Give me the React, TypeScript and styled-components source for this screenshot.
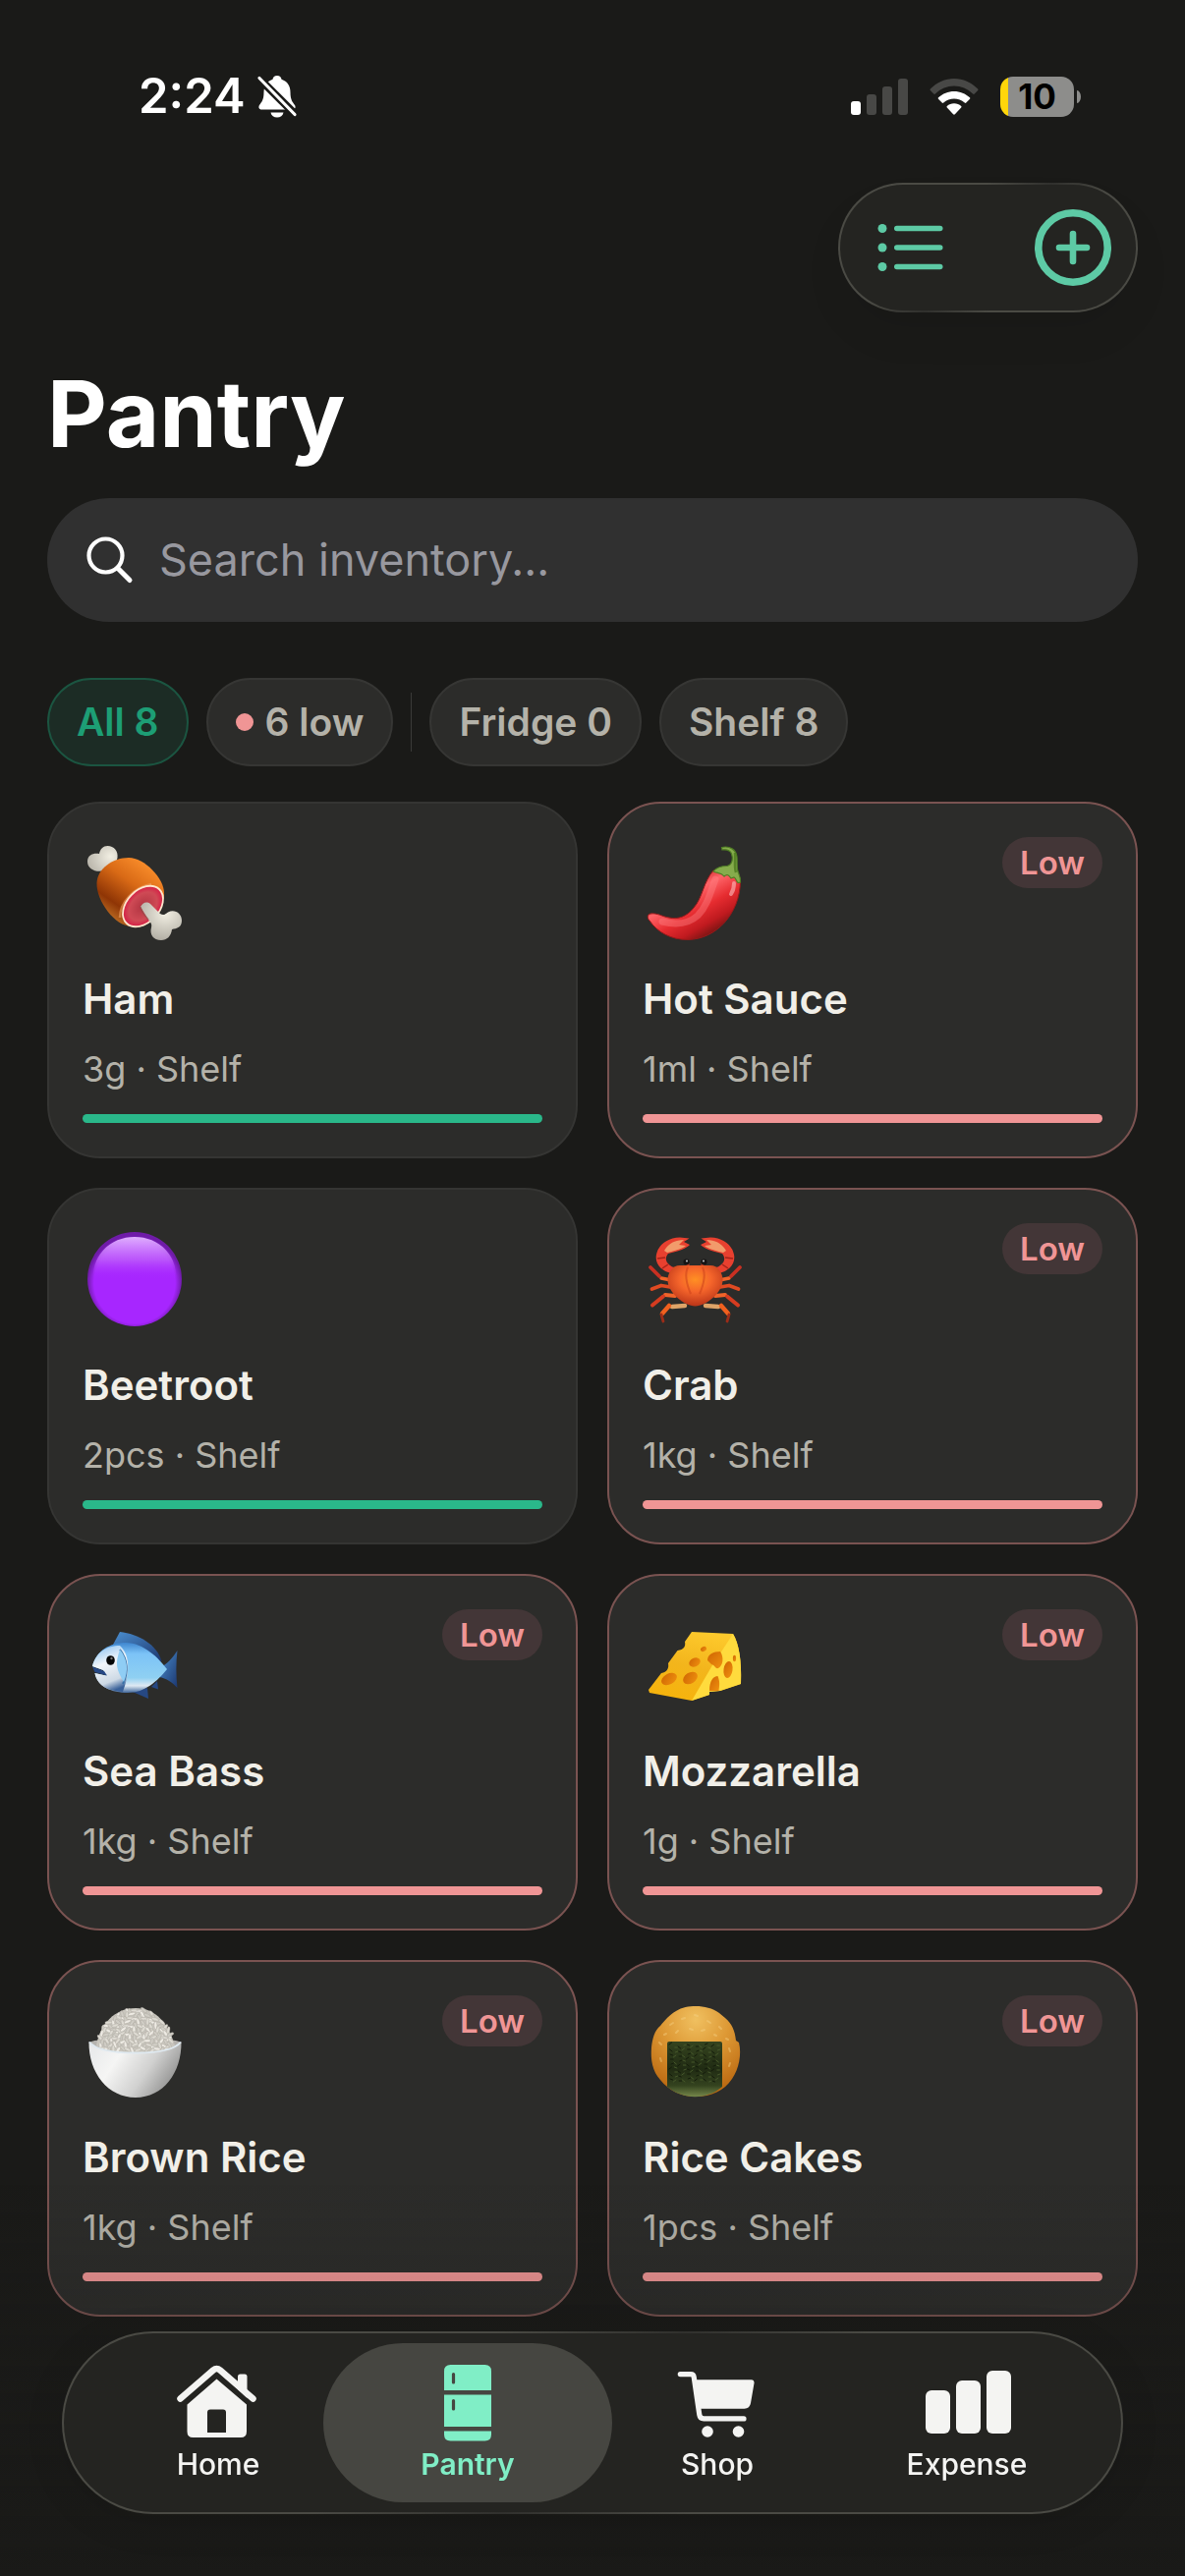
import React from "react";
import styled, { createGlobalStyle, css } from "styled-components";

const color = {
  page: "#1a1a18",
  card: "#2c2c2a",
  cardBorder: "#353533",
  field: "#303030",
  text: "#f1efe8",
  muted: "#b4b2a9",
  placeholder: "#98989f",
  low: "#f09595",
  lowBorder: "#7a5351",
  lowFill: "#433637",
  green: "#2ab88a",
  mint: "#5dcaa5",
  glass: "#242421",
};

const GlobalStyle = createGlobalStyle`
  *, *::before, *::after { box-sizing: border-box; }
  body {
    margin: 0;
    background: ${color.page};
    color: ${color.text};
    font-family: Inter, "Liberation Sans", sans-serif;
  }
  button, input { font: inherit; }
`;

const glassPanel = css`
  border: 2px solid transparent;
  background:
    linear-gradient(${color.glass}, ${color.glass}) padding-box,
    linear-gradient(135deg, #4a4a44 0 35%, #30302d 50%, #4a4a44 65% 100%) border-box;
`;

const Screen = styled.div`
  min-height: 100vh;
  padding: 68px 48px 264px;
`;

const StatusBar = styled.header`
  display: flex;
  align-items: center;
  justify-content: space-between;
  height: 60px;
  padding: 0 58px 0 93px;
`;

const StatusGroup = styled.div<{ $gap: number }>`
  display: flex;
  align-items: center;
  gap: ${(p) => p.$gap}px;
`;

const Clock = styled.time`
  font-size: 49px;
  font-weight: 600;
  line-height: 60px;
  color: #fff;
`;

const Battery = styled.div`
  display: flex;
  align-items: center;
  gap: 3px;
`;

const BatteryBody = styled.div`
  width: 75px;
  height: 41px;
  border-radius: 13px;
  background: linear-gradient(90deg, #ffd60a 8px, #8d8d8b 8px);
  color: #000;
  font-size: 35px;
  font-weight: 700;
  line-height: 41px;
  text-align: center;
`;

const BatteryTip = styled.span`
  width: 4px;
  height: 13px;
  border-radius: 0 4px 4px 0 / 0 50% 50% 0;
  background: #8d8d8b;
`;

const Toolbar = styled.div`
  display: flex;
  align-items: center;
  gap: 93px;
  width: fit-content;
  height: 132px;
  margin: 58px 0 45px auto;
  padding: 0 25px 0 38px;
  border-radius: 66px;
  ${glassPanel}
  box-shadow: 0 24px 40px rgba(0, 0, 0, 0.06);
`;

const IconButton = styled.button`
  display: flex;
  padding: 0;
  border: 0;
  background: none;
  color: ${color.mint};
`;

const Title = styled.h1`
  margin: 0 0 28px;
  color: #fff;
  font-size: 94px;
  font-weight: 700;
  line-height: 116px;
`;

const SearchField = styled.label`
  display: flex;
  align-items: center;
  gap: 26px;
  height: 126px;
  margin-bottom: 57px;
  padding: 0 38px;
  border-radius: 63px;
  background: ${color.field};
`;

const SearchInput = styled.input`
  flex: 1;
  min-width: 0;
  padding: 0;
  border: 0;
  outline: 0;
  background: none;
  color: #fff;
  font-size: 45px;
  line-height: 60px;
  &::placeholder {
    color: ${color.placeholder};
    opacity: 1;
  }
`;

const Filters = styled.div`
  display: flex;
  align-items: center;
  gap: 18px;
  margin-bottom: 36px;
`;

const Chip = styled.button<{ $active?: boolean }>`
  display: flex;
  align-items: center;
  gap: 12px;
  height: 90px;
  padding: 0 28px;
  border: 2px solid ${(p) => (p.$active ? "#1b5541" : "#363634")};
  border-radius: 45px;
  background: ${(p) => (p.$active ? "#1c2c25" : color.card)};
  color: ${(p) => (p.$active ? "#1d9e75" : color.muted)};
  font-size: 39px;
  font-weight: 600;
  line-height: 48px;
  white-space: nowrap;
`;

const Dot = styled.span`
  width: 18px;
  height: 18px;
  border-radius: 50%;
  background: ${color.low};
`;

const Divider = styled.span`
  width: 1px;
  height: 60px;
  background: #3a3a38;
`;

const Grid = styled.main`
  display: grid;
  grid-template-columns: 1fr 1fr;
  gap: 30px;
`;

const Card = styled.article<{ $low: boolean }>`
  padding: 34px;
  border: 2px solid ${(p) => (p.$low ? color.lowBorder : color.cardBorder)};
  border-radius: 54px;
  background: ${color.card};
`;

const CardTop = styled.div`
  display: flex;
  align-items: flex-start;
  justify-content: space-between;
  height: 108px;
  margin-bottom: 30px;
`;

const Badge = styled.span`
  padding: 0 18px;
  border-radius: 26px;
  background: ${color.lowFill};
  color: ${color.low};
  font-size: 33px;
  font-weight: 600;
  line-height: 52px;
`;

const Name = styled.h2`
  margin: 0 0 22px;
  font-size: 42px;
  font-weight: 600;
  line-height: 54px;
`;

const Detail = styled.p`
  margin: 0 0 24px;
  color: ${color.muted};
  font-size: 36px;
  line-height: 44px;
`;

const Meter = styled.div<{ $low: boolean }>`
  height: 9px;
  border-radius: 5px;
  background: ${(p) => (p.$low ? color.low : color.green)};
`;

const BottomFade = styled.div`
  position: fixed;
  inset: auto 0 0;
  height: 400px;
  background: linear-gradient(rgba(26, 26, 24, 0), rgba(26, 26, 24, 0.5));
  pointer-events: none;
`;

const TabBar = styled.nav`
  position: fixed;
  right: 63px;
  bottom: 63px;
  left: 63px;
  display: flex;
  padding: 10px;
  border-radius: 93px;
  ${glassPanel}
  box-shadow: 0 8px 40px rgba(0, 0, 0, 0.1);
`;

const Tab = styled.a<{ $active?: boolean }>`
  display: flex;
  flex: 1;
  flex-direction: column;
  align-items: center;
  gap: 5px;
  height: 162px;
  padding-top: 22px;
  border-radius: 81px;
  color: #f4f4f2;
  font-size: 30px;
  font-weight: 500;
  line-height: 36px;
  text-decoration: none;
  & + & {
    margin-left: -40px;
  }
  ${(p) =>
    p.$active &&
    css`
      background: #464641;
      color: #80eec6;
      font-weight: 600;
    `}
`;

/* ---------- status and toolbar icons ---------- */

const BellOff = () => (
  <svg width="42" height="44" viewBox="0 0 42 44" fill="#fff" aria-hidden="true">
    <path d="M21 1c2.600 0 4.200 1.500 4.500 3.700C31.500 6.700 34.500 11.500 34.500 18c0 8 2.500 10 4.500 13 1.300 2.200.4 4.500-2.300 4.500H5.300C2.600 35.500 1.700 33.200 3 31c2-3 4.500-5 4.500-13 0-6.500 3-11.300 9-13.300C16.800 2.500 18.400 1 21 1z" />
    <path d="M14.500 38.500h13c-.6 3.300-3.200 5-6.500 5s-5.900-1.700-6.500-5z" />
    <path d="M2 3l38 38" stroke={color.page} strokeWidth="8" />
    <path d="M3 3.500l36 37" stroke="#fff" strokeWidth="3.200" strokeLinecap="round" />
  </svg>
);

const Signal = () => (
  <svg width="58" height="37" viewBox="0 0 58 37" aria-hidden="true">
    <rect y="23" width="10" height="14" rx="3" fill="#fff" />
    <rect x="16" y="16" width="10" height="21" rx="3" fill="#484846" />
    <rect x="32" y="8" width="10" height="29" rx="3" fill="#484846" />
    <rect x="48" width="10" height="37" rx="3" fill="#484846" />
  </svg>
);

const Wifi = () => (
  <svg width="50" height="37" viewBox="0 0 50 37" aria-hidden="true">
    <path d="M.8 10.600C7.500 3.700 16 0 25 0s17.500 3.700 24.200 10.600c.5.500.5 1 0 1.500L45.800 15.500c-.5.500-1.200.5-1.700 0C38.800 10.500 32 7.600 25 7.600S11.200 10.500 5.900 15.500c-.5.500-1.200.5-1.700 0L.8 12.100c-.5-.5-.5-1 0-1.500z" fill="#484846" />
    <path d="M9 19.200C13.300 15.200 19 12.900 25 12.900S36.700 15.200 41 19.200c.5.500.5 1 0 1.500l-3.700 3.800c-.5.500-1.100.5-1.600 0C32.700 21.900 29 20.400 25 20.400S17.300 21.900 14.300 24.500c-.5.500-1.100.5-1.600 0L9 20.700c-.5-.5-.5-1 0-1.500z" fill="#fff" />
    <path d="M17.800 28C19.700 26.300 22.200 25.300 25 25.300s5.300 1 7.200 2.700c.5.500.5 1 0 1.500l-6.300 6.700c-.6.600-1.200.6-1.800 0l-6.300-6.700c-.5-.5-.5-1 0-1.500z" fill="#fff" />
  </svg>
);

const ListIcon = () => (
  <svg width="67" height="50" viewBox="0 0 67 50" fill="currentColor" aria-hidden="true">
    {[5.5, 25, 44.5].map((y) => (
      <g key={y}>
        <circle cx="5" cy={y} r="4.500" />
        <rect x="17" y={y - 2.8} width="49.500" height="5.600" rx="2.800" />
      </g>
    ))}
  </svg>
);

const AddIcon = () => (
  <svg width="78" height="78" viewBox="0 0 78 78" fill="none" stroke="currentColor" aria-hidden="true">
    <circle cx="39" cy="39" r="35.200" strokeWidth="7.600" />
    <path d="M39 25v28M25 39h28" strokeWidth="6.600" strokeLinecap="round" />
  </svg>
);

const SearchIcon = () => (
  <svg width="50" height="50" viewBox="0 0 50 50" fill="none" stroke="#fff" strokeLinecap="round" aria-hidden="true">
    <circle cx="21.500" cy="20.500" r="17" strokeWidth="4.200" />
    <path d="M34 33.500L46 45.500" strokeWidth="5" />
  </svg>
);

/* ---------- tab icons ---------- */

const HomeIcon = () => (
  <svg width="96" height="78" viewBox="0 0 96 78" fill="currentColor" aria-hidden="true">
    <path d="M68 25V12q0-2.500 2.500-2.500h4.500q2.500 0 2.500 2.500v22z" />
    <path d="M9.500 34.500L43 5.500q3.500-3 7 0l33.500 29" fill="none" stroke="currentColor" strokeWidth="6.500" strokeLinecap="round" strokeLinejoin="round" />
    <path fillRule="evenodd" d="M46.500 14.500L77 40.500V68q0 6-6 6H22.500q-6 0-6-6V40.500zM40 45.500q-3 0-3 3V69h19V48.500q0-3-3-3z" />
  </svg>
);

const FridgeIcon = () => (
  <svg width="96" height="78" viewBox="0 0 96 78" fill="currentColor" aria-hidden="true">
    <path d="M24 26V6.500Q24 0 30.500 0h35Q72 0 72 6.500V26z" />
    <path d="M24 30.500h48V63H24z" />
    <path d="M24 67.500h48V71q0 6.500-6.500 6.500h-35Q24 77.500 24 71z" />
    <path d="M33.500 9.500v8.500M33.500 36.500V45" stroke="#464641" strokeWidth="3.200" strokeLinecap="round" />
  </svg>
);

const CartIcon = () => (
  <svg width="96" height="78" viewBox="1 0 96 78" fill="currentColor" aria-hidden="true">
    <path d="M11.300 9.600H22q2.800 0 3.200 2.800l5.600 38.500q.6 4 4.500 4H76" fill="none" stroke="currentColor" strokeWidth="5.200" strokeLinecap="round" strokeLinejoin="round" />
    <path d="M26.500 15.300H83.500q3.500 0 3 3.500L83 39q-.9 5.700-6.500 5.700H31z" />
    <circle cx="39" cy="68" r="5.800" />
    <circle cx="70.500" cy="68" r="5.800" />
  </svg>
);

const ExpenseIcon = () => (
  <svg width="96" height="78" viewBox="1 0 96 78" fill="currentColor" aria-hidden="true">
    <rect x="7" y="26" width="25" height="44" rx="6" />
    <rect x="38" y="16" width="25" height="54" rx="6" />
    <rect x="69" y="6" width="25" height="64" rx="6" />
  </svg>
);

/* ---------- food pictures ---------- */

const Food = ({ label, children }: { label: string; children: React.ReactNode }) => (
  <svg width="108" height="108" viewBox="0 0 108 108" role="img" aria-label={label}>
    {children}
  </svg>
);

const Ham = () => (
  <Food label="Ham">
    <defs>
      <linearGradient id="hamSkin" x1=".75" y1=".05" x2=".2" y2=".85">
        <stop offset="0" stopColor="#fb8f2c" />
        <stop offset=".4" stopColor="#d96a16" />
        <stop offset=".8" stopColor="#8f3505" />
        <stop offset="1" stopColor="#b5651f" />
      </linearGradient>
      <radialGradient id="hamBone" cx=".6" cy=".3" r=".8">
        <stop offset="0" stopColor="#f1eee2" />
        <stop offset="1" stopColor="#aaa69c" />
      </radialGradient>
      <radialGradient id="hamCut">
        <stop offset="0" stopColor="#b03441" />
        <stop offset=".7" stopColor="#cf4a55" />
        <stop offset="1" stopColor="#d61c45" />
      </radialGradient>
    </defs>
    <path d="M25.500 9C32 9 36.500 14 35.500 21L34 27L44 38L36 45L23 34C14 36.500 5 33 5 25C5 18 11 16 17 17C18 12 21 9 25.500 9Z" fill="url(#hamBone)" />
    <path d="M47 21C63 21 83 42 83 57C83 73 66 91 50 91C33 91 14 65 14.500 47C15 32 31 21 47 21Z" fill="url(#hamSkin)" />
    <path d="M38 82C38 67 52 51 70 48" fill="none" stroke="#f2a063" strokeWidth="2.500" opacity=".6" />
    <ellipse cx="61.500" cy="70.500" rx="24" ry="16.500" transform="rotate(-46 61.500 70.500)" fill="url(#hamCut)" stroke="#ffe6cc" strokeWidth="1.800" />
    <path d="M59 71C61 67 65 65 69 68L79 78C82 80 84 79 87 76.500C94 73 101 78 101 85C101 92 96 93 91 94C90 101 86 105 80 105C72 105 68 99 70 92C71 88 69 87 67 84Z" fill="url(#hamBone)" />
    <path d="M59 71C60 77 64 80 67 84" fill="none" stroke="#8a4b48" strokeWidth="1.500" opacity=".6" />
  </Food>
);

const Chili = () => (
  <Food label="Hot pepper">
    <defs>
      <linearGradient id="chiliSkin" x1=".3" y1=".2" x2=".8" y2=".85">
        <stop offset="0" stopColor="#c41f23" />
        <stop offset=".25" stopColor="#ff6468" />
        <stop offset=".55" stopColor="#e62c30" />
        <stop offset=".8" stopColor="#c01a1f" />
        <stop offset="1" stopColor="#741412" />
      </linearGradient>
    </defs>
    <path d="M72 34C62 45 61 62 52 72C45 81 36 84 27 82C20 81 15 77 8 78C4 79 5 83 7 85C15 97 29 104.500 46 104.500C75 104 99 78 99.500 45L92 35Z" fill="url(#chiliSkin)" stroke="#96191a" strokeWidth="1" />
    <path d="M74 43C69 56 66 70 56 80C47 88 35 90 20 86" fill="none" stroke="#ff8486" strokeWidth="7" strokeLinecap="round" opacity=".4" />
    <path d="M93 47C93 52 92 55 90 58" fill="none" stroke="#ffd9d9" strokeWidth="4" strokeLinecap="round" opacity=".5" />
    <path d="M72 35C75 31 81 29.500 86 29.500C92 28 92 21 90.500 17C89 13 85 12.500 81 13L80.500 10.500C89 8.500 95 13 96 20C96.500 27 95.500 31 97 35C98 38 100 41 99.500 46L97 46.500C95 44 95 42 93 41L90 42C88 39 86 37 83 40C80 36 76 37 72 35Z" fill="#86ac4c" stroke="#4f7d24" strokeWidth="1.200" />
    <path d="M94 16C94.500 24 93 30 95 36" fill="none" stroke="#4c7a1e" strokeWidth="2.500" opacity=".8" />
  </Food>
);

const Beetroot = () => (
  <Food label="Purple circle">
    <defs>
      <radialGradient id="beetFill" cy=".54">
        <stop offset=".86" stopColor="#a726ff" />
        <stop offset="1" stopColor="#6f1ba8" />
      </radialGradient>
      <linearGradient id="beetShine" x1="0" y1="0" x2="0" y2="1">
        <stop offset="0" stopColor="#e0b0ff" />
        <stop offset=".55" stopColor="#c062fa" stopOpacity=".75" />
        <stop offset="1" stopColor="#a726ff" stopOpacity="0" />
      </linearGradient>
    </defs>
    <circle cx="53" cy="57" r="48" fill="url(#beetFill)" />
    <path d="M10.500 57C10.500 30 30 14 53 14S95.500 30 95.500 57Z" fill="url(#beetShine)" />
  </Food>
);

const CrabSide = () => (
  <g>
    <g fill="none" strokeLinecap="round" strokeLinejoin="round">
      <path d="M33 72L42 74M28 62L33 63" stroke="#c48b58" strokeWidth="3" />
      <path d="M29 58L19 56" stroke="#f0642a" strokeWidth="3.500" />
      <path d="M17 54L8 45" stroke="#c93022" strokeWidth="3.800" />
      <path d="M28 65L19 63.500L9.500 67" stroke="#e04a22" strokeWidth="3.800" />
      <path d="M33 74L23 73" stroke="#f0642a" strokeWidth="4" />
      <path d="M21 74.500L10 83.500" stroke="#d63c20" strokeWidth="4" />
      <path d="M43 84L30 85" stroke="#dda468" strokeWidth="4.500" />
      <path d="M27 84L20 92" stroke="#f0601e" strokeWidth="4.500" />
      <path d="M19 93L21 100" stroke="#9c2c18" strokeWidth="2.800" />
    </g>
    <path d="M29 51C20 49 12 42 14 32C16 22 25 15 38 14.500L47.500 15.500L42 19L48 22C43 27 34 29 26 31C21 37 25 43 34 46Z" fill="#e8402f" />
    <path d="M22 28C26 21 33 17 42 17L37 22L44 23C39 27 32 28 25 30Z" fill="#f29b6b" />
    <path d="M15 36L23 35M20 46L26 42" stroke="#a52218" strokeWidth="1.500" />
    <path d="M46 45V41" stroke="#b83c24" strokeWidth="3" />
    <circle cx="44.500" cy="39.500" r="3" fill="#151313" />
    <circle cx="45" cy="38.500" r=".9" fill="#ddd" />
  </g>
);

const Crab = () => (
  <Food label="Crab">
    <defs>
      <radialGradient id="crabShell" cx=".5" cy=".35" r=".65">
        <stop offset="0" stopColor="#ff9023" />
        <stop offset=".45" stopColor="#f5652b" />
        <stop offset="1" stopColor="#b93418" />
      </radialGradient>
    </defs>
    <CrabSide />
    <g transform="matrix(-1 0 0 1 107 0)">
      <CrabSide />
    </g>
    <path d="M38 43H69C77 43 81.500 51 81.500 58C81.500 70 65 84.500 53.500 84.500S25.500 70 25.500 58C25.500 51 30 43 38 43Z" fill="url(#crabShell)" />
    <path d="M46 45C42 53 46 65 49 72M61 45C65 53 61 65 58 72" fill="none" stroke="#cf451c" strokeWidth="2" opacity=".6" />
  </Food>
);

const Fish = () => (
  <Food label="Fish">
    <defs>
      <linearGradient id="fishBody" x1="0" y1="0" x2="0" y2="1">
        <stop offset="0" stopColor="#3f86cf" />
        <stop offset=".22" stopColor="#7cc3f7" />
        <stop offset=".7" stopColor="#8fd0f2" />
        <stop offset=".86" stopColor="#dfe9f2" />
        <stop offset="1" stopColor="#41689c" />
      </linearGradient>
      <linearGradient id="fishFin" x1="0" y1="0" x2="1" y2="1">
        <stop offset="0" stopColor="#4b8fd0" />
        <stop offset="1" stopColor="#1c376f" />
      </linearGradient>
      <linearGradient id="fishHead" x1=".2" y1="0" x2=".5" y2="1">
        <stop offset="0" stopColor="#8fc4f2" />
        <stop offset=".4" stopColor="#f2f6fa" />
        <stop offset=".8" stopColor="#cdd9e5" />
        <stop offset="1" stopColor="#3a6199" />
      </linearGradient>
    </defs>
    <path d="M31 36L38 23C57 25 76 36 80.500 53L66 52Z" fill="url(#fishFin)" />
    <path d="M78 60C86 56 92 49 96.500 42C95 55 95 67 96.500 80C92 75 85 70 78 69Z" fill="url(#fishFin)" />
    <path d="M51 84L67 91L66 80ZM70 79L77 81.500L76 73Z" fill="#264883" />
    <path d="M10 58C14 42 28 34 44 34C62 34 78 50 86 61C76 73 64 85 46 85C30 85 15 79 12.500 65L24 67.500L21 62Z" fill="url(#fishBody)" />
    <path d="M10 58C14 43 25 37 38 37C49 47 48 66 41 84C28 83 15 79 12.500 65L24 67.500L21 62Z" fill="url(#fishHead)" />
    <path d="M38 41C46 51 47 64 41 76" fill="none" stroke="#3972a8" strokeWidth="1.800" />
    <path d="M38 41C33 55 34 61 42 74C47 62 46 51 38 41Z" fill="#8fcdf4" />
    <path d="M10 58.500L22 63L25 67.500L12.500 64" fill="#254886" />
    <ellipse cx="28.500" cy="52" rx="4.300" ry="4.800" fill="#050505" />
    <circle cx="29.500" cy="50" r="1.200" fill="#777" />
  </Food>
);

const Cheese = () => (
  <Food label="Cheese">
    <defs>
      <linearGradient id="cheeseTop" x1=".6" y1="0" x2=".3" y2="1">
        <stop offset="0" stopColor="#fdc92c" />
        <stop offset=".5" stopColor="#f3b51c" />
        <stop offset="1" stopColor="#f6b30c" />
      </linearGradient>
      <linearGradient id="cheeseHole" x1="0" y1="0" x2="1" y2="1">
        <stop offset="0" stopColor="#cf6503" />
        <stop offset="1" stopColor="#f0910f" />
      </linearGradient>
    </defs>
    <path d="M50 23L92 25C98 35 101 52 100 76L79 83L68 84V87L50 93L7 85L6 82L19 65C25 64 27 60 26 55L35.500 42C42 41 44 38 43 33Z" fill="url(#cheeseTop)" />
    <path d="M92 25C98 35 101 52 100 76L79 83L68 84V87L50 93L71 57Z" fill="#ffdb3d" />
    <g fill="url(#cheeseHole)">
      <ellipse cx="27" cy="71" rx="8.500" ry="5.500" transform="rotate(-28 27 71)" />
      <ellipse cx="48.500" cy="70" rx="8" ry="5.500" transform="rotate(-32 48.500 70)" />
      <ellipse cx="53" cy="54" rx="6" ry="4.300" transform="rotate(-25 53 54)" />
      <path d="M66 52C66 46 72 43 79 43C83 49 82 57 77 60C74 61 74 57 70 56Z" />
      <ellipse cx="87" cy="61.500" rx="4.500" ry="8.500" transform="rotate(8 87 61.500)" />
      <ellipse cx="62" cy="40.500" rx="3.200" ry="2.300" transform="rotate(-30 62 40.500)" />
      <ellipse cx="93.500" cy="50" rx="1.600" ry="3.200" />
      <path d="M68 83C68 73 72 68 76.500 68C79 74 78 78 77.500 83Z" />
    </g>
  </Food>
);

/* Grains sit on a jittered lattice inside the dome of rice. */
const grains = Array.from({ length: 198 }, (_, i) => {
  const row = Math.floor(i / 18);
  const x = 18 + (i % 18) * 4.3 + ((i * 29) % 7) / 2;
  const y = 15 + row * 3.9 + ((i * 17) % 5) / 2;
  return { x, y, angle: (i * i * 31 + row * 53) % 180, shade: ["#eeebe4", "#dedbd3", "#d0cdc5"][(i * 5 + row) % 3] };
}).filter(({ x, y }) => ((x - 54) / 37) ** 2 + ((y - 50) / 36) ** 2 < 1);

const Rice = () => (
  <Food label="Bowl of rice">
    <defs>
      <linearGradient id="riceBowl" x1="0" y1=".2" x2="1" y2=".6">
        <stop offset="0" stopColor="#e9eaeb" />
        <stop offset=".3" stopColor="#f5f5f4" />
        <stop offset=".65" stopColor="#d1d1d0" />
        <stop offset="1" stopColor="#8d8d8c" />
      </linearGradient>
    </defs>
    <path d="M7 48C13 42 95 42 100 48C100 57 80 62 54 62S7 57 7 48Z" fill="#b4b2ae" />
    <path d="M14 51C18 29 33 13 54 13S87 29 94 51C85 61 23 61 14 51Z" fill="#c9c6be" />
    {grains.map((g, i) => (
      <ellipse key={i} cx={g.x} cy={g.y} rx="3.800" ry="1.500" fill={g.shade} stroke="#a8a49b" strokeWidth=".4" transform={`rotate(${g.angle} ${g.x} ${g.y})`} />
    ))}
    <path d="M6.500 47C12 55 31 58.500 54 58.500S95 55 100.500 47C101 79 82 104 54 104S6 79 6.500 47Z" fill="url(#riceBowl)" />
    <path d="M7 47.500C13 55 31 58.500 54 58.500S94 55 100 47.500" fill="none" stroke="#dfe9f0" strokeWidth="2" />
  </Food>
);

const flecks = Array.from({ length: 96 }, (_, i) => ({
  x: 27 + (i % 12) * 4.3 + ((i * 13) % 5) / 2,
  y: 50 + Math.floor(i / 12) * 5 + ((i * 7) % 4),
  tilt: ((i * 37) % 5) - 2,
}));

const RiceCracker = () => (
  <Food label="Rice cracker">
    <defs>
      <radialGradient id="crackerFill" cx=".5" cy=".15" r=".85">
        <stop offset="0" stopColor="#f0c060" />
        <stop offset=".45" stopColor="#dd9834" />
        <stop offset="1" stopColor="#b9660f" />
      </radialGradient>
      <linearGradient id="noriFill" x1="0" y1="0" x2="0" y2="1">
        <stop offset="0" stopColor="#35441f" />
        <stop offset=".5" stopColor="#202b13" />
        <stop offset=".8" stopColor="#34431f" />
        <stop offset="1" stopColor="#75874a" />
      </linearGradient>
    </defs>
    <path d="M54 11C63 11 71 13 78 18L84 23C91 29 94 36 95 46L98 48C101 60 98 75 91 85C83 97 70 103 54 103C39 103 27 97 18 86C10 77 8 66 9 53C10 44 12 36 18 31C23 25 27 20 34 16C40 12 47 11 54 11Z" fill="url(#crackerFill)" />
    <path d="M28 30l3-2M40 24l3-1M53 20l3 1M66 26l3 2M78 32l2 2M34 38l2-2M48 34l3 1M60 36l3-1M73 40l2 1M17 48l2 2M18 64l1 3M88 54l1 3M89 69l-1 3M22 40l2-1M85 44l2 1" stroke="#f8d68a" strokeWidth="2" strokeLinecap="round" opacity=".4" />
    <path d="M25 49Q25 47 27 47H79Q81 47 81 49V93C66 106.500 41 106.500 25 93Z" fill="url(#noriFill)" />
    {flecks.map((f, i) => (
      <path key={i} d={`M${f.x} ${f.y}l2.600 ${f.tilt}`} stroke={i % 2 ? "#46582b" : "#141c0b"} strokeWidth="1" strokeLinecap="round" />
    ))}
  </Food>
);

/* ---------- data ---------- */

const items = [
  { name: "Ham", amount: "3g", low: false, Picture: Ham },
  { name: "Hot Sauce", amount: "1ml", low: true, Picture: Chili },
  { name: "Beetroot", amount: "2pcs", low: false, Picture: Beetroot },
  { name: "Crab", amount: "1kg", low: true, Picture: Crab },
  { name: "Sea Bass", amount: "1kg", low: true, Picture: Fish },
  { name: "Mozzarella", amount: "1g", low: true, Picture: Cheese },
  { name: "Brown Rice", amount: "1kg", low: true, Picture: Rice },
  { name: "Rice Cakes", amount: "1pcs", low: true, Picture: RiceCracker },
];

const tabs = [
  { label: "Home", Icon: HomeIcon },
  { label: "Pantry", Icon: FridgeIcon, active: true },
  { label: "Shop", Icon: CartIcon },
  { label: "Expense", Icon: ExpenseIcon },
];

export default function App() {
  return (
    <>
      <GlobalStyle />
      <Screen>
        <StatusBar>
          <StatusGroup $gap={11}>
            <Clock>2:24</Clock>
            <BellOff />
          </StatusGroup>
          <StatusGroup $gap={22}>
            <Signal />
            <Wifi />
            <Battery>
              <BatteryBody>10</BatteryBody>
              <BatteryTip />
            </Battery>
          </StatusGroup>
        </StatusBar>

        <Toolbar>
          <IconButton type="button" aria-label="List view">
            <ListIcon />
          </IconButton>
          <IconButton type="button" aria-label="Add item">
            <AddIcon />
          </IconButton>
        </Toolbar>

        <Title>Pantry</Title>

        <SearchField>
          <SearchIcon />
          <SearchInput type="text" aria-label="Search inventory" placeholder="Search inventory..." />
        </SearchField>

        <Filters>
          <Chip type="button" $active>All 8</Chip>
          <Chip type="button"><Dot />6 low</Chip>
          <Divider />
          <Chip type="button">Fridge 0</Chip>
          <Chip type="button">Shelf 8</Chip>
        </Filters>

        <Grid>
          {items.map(({ name, amount, low, Picture }) => (
            <Card key={name} $low={low}>
              <CardTop>
                <Picture />
                {low && <Badge>Low</Badge>}
              </CardTop>
              <Name>{name}</Name>
              <Detail>{amount} · Shelf</Detail>
              <Meter $low={low} />
            </Card>
          ))}
        </Grid>
      </Screen>

      <BottomFade />
      <TabBar>
        {tabs.map(({ label, Icon, active }) => (
          <Tab key={label} href={`#${label.toLowerCase()}`} $active={active}>
            <Icon />
            {label}
          </Tab>
        ))}
      </TabBar>
    </>
  );
}
